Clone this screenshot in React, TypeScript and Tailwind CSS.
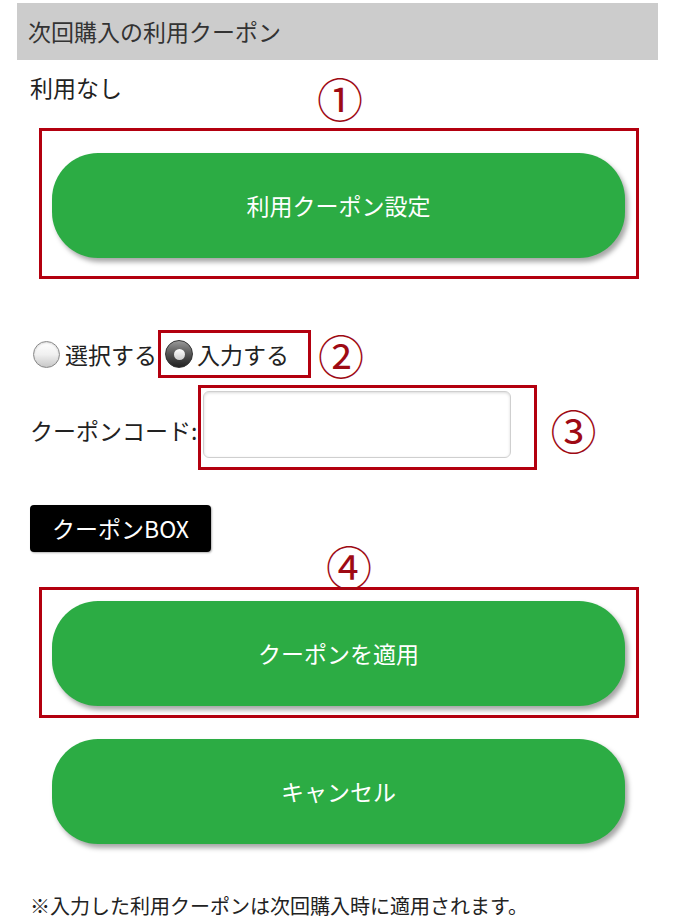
function Radio({ checked }: { checked?: boolean }) {
  if (checked) {
    return (
      <span className="flex h-[28px] w-[28px] items-center justify-center rounded-full border border-[#333] bg-gradient-to-b from-[#999] via-[#555] to-[#222]">
        <span className="h-[11px] w-[11px] rounded-full bg-gradient-to-b from-white to-[#ccc]" />
      </span>
    );
  }
  return (
    <span className="h-[27px] w-[27px] rounded-full border border-[#888] bg-gradient-to-b from-white via-[#f0f0f0] to-[#c8c8c8] shadow-[inset_0_1px_2px_rgba(0,0,0,0.15)]" />
  );
}

function GreenButton({ label }: { label: string }) {
  return (
    <button className="flex h-[105px] w-[573px] items-center justify-center rounded-[46px] bg-[#2cac44] text-[23px] text-white shadow-[3px_4px_5px_rgba(0,0,0,0.35)]">
      {label}
    </button>
  );
}

function Mark({ n }: { n: string }) {
  return <span className="text-[46px] leading-none text-[#9e0a14]">{n}</span>;
}

export default function App() {
  return (
    <div
      className="relative h-[921px] w-[675px] overflow-hidden bg-white text-[#222]"
      style={{ fontFamily: '"Noto Sans CJK JP", "Noto Sans", sans-serif' }}
    >
      {/* Header */}
      <div className="mx-[17px] mt-[3px] flex h-[57px] items-center bg-[#cccccc] pl-[11px] text-[23px] text-[#333]">
        次回購入の利用クーポン
      </div>

      {/* Current coupon */}
      <div className="relative ml-[30px] mt-[13px] h-[29px] text-[23px] leading-[29px]">
        利用なし
        <span className="absolute left-[287px] top-[1px]">
          <Mark n="①" />
        </span>
      </div>

      {/* Box 1 */}
      <div className="ml-[39px] mt-[26px] h-[151px] w-[600px] border-[3px] border-[#b3000f] pl-[10px] pt-[22px]">
        <GreenButton label="利用クーポン設定" />
      </div>

      {/* Radio row */}
      <div className="relative ml-[33px] mt-[51px] flex h-[48px] items-center text-[23px]">
        <Radio />
        <span className="ml-[5px]">選択する</span>
        <div className="ml-[1px] flex h-[48px] w-[153px] items-center border-[3px] border-[#b3000f] pl-[4px]">
          <Radio checked />
          <span className="ml-[4px]">入力する</span>
        </div>
        <span className="ml-[7px] mt-[4px]">
          <Mark n="②" />
        </span>
      </div>

      {/* Coupon code row */}
      <div className="ml-[30px] mt-[7px] flex items-center text-[23px]">
        <span className="mt-[6px]">クーポンコード:</span>
        <div className="ml-[1px] h-[85px] w-[339px] border-[3px] border-[#b3000f] pl-[2px] pt-[3px]">
          <input
            type="text"
            className="h-[67px] w-[308px] rounded-[6px] border border-[#cfcfcf] bg-white shadow-[inset_0_1px_3px_rgba(0,0,0,0.15)] outline-none"
          />
        </div>
        <span className="ml-[13px] mt-[8px]">
          <Mark n="③" />
        </span>
      </div>

      {/* Coupon BOX */}
      <div className="relative ml-[30px] mt-[35px]">
        <button className="flex h-[47px] w-[181px] items-center justify-center rounded-[4px] bg-black text-[23px] text-white shadow-[1px_1px_2px_rgba(0,0,0,0.3)]">
          クーポンBOX
        </button>
        <span className="absolute left-[296px] top-[37px]">
          <Mark n="④" />
        </span>
      </div>

      {/* Box 4 */}
      <div className="ml-[39px] mt-[35px] h-[131px] w-[600px] border-[3px] border-[#b3000f] pl-[10px] pt-[11px]">
        <GreenButton label="クーポンを適用" />
      </div>

      {/* Cancel */}
      <div className="ml-[52px] mt-[21px]">
        <GreenButton label="キャンセル" />
      </div>

      <p className="ml-[30px] mt-[50px] text-[20px] leading-[24px]">
        ※入力した利用クーポンは次回購入時に適用されます。
      </p>
    </div>
  );
}
